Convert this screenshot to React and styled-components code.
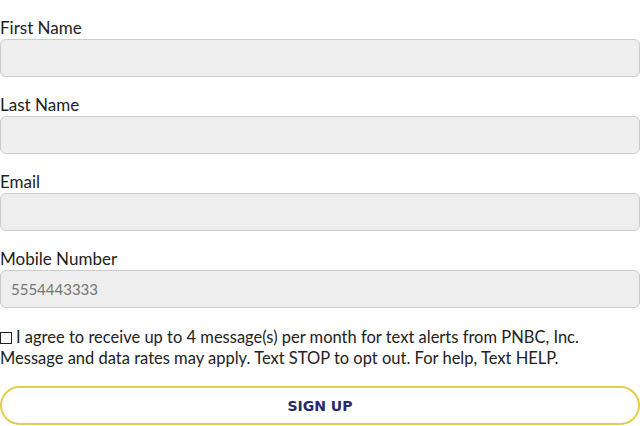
import { createGlobalStyle } from "styled-components";
import styled from "styled-components";

const GlobalStyle = createGlobalStyle`
  html, body {
    margin: 0;
    padding: 0;
    background: #fff;
  }
  body {
    font-family: Lato, "Noto Sans", sans-serif;
    color: #222;
  }
`;

const Form = styled.form`
  display: flex;
  flex-direction: column;
  gap: 17px;
  padding-top: 17px;
  width: 640px;
`;

const Field = styled.div`
  display: flex;
  flex-direction: column;
`;

const Label = styled.label`
  font-size: 17px;
  line-height: 22px;
`;

const Input = styled.input`
  box-sizing: border-box;
  width: 100%;
  height: 38px;
  margin: 0;
  padding: 0 10px;
  background: #eeeeee;
  border: 1px solid #cccccc;
  border-radius: 6px;
  font-family: Lato, "Noto Sans", sans-serif;
  font-size: 15px;
  color: #222;
  outline: none;

  &::placeholder {
    color: #757575;
  }
`;

const Consent = styled.label`
  font-size: 16.5px;
  line-height: 21px;
  padding-top: 2px;
`;

const Check = styled.input`
  appearance: none;
  box-sizing: border-box;
  width: 12px;
  height: 12px;
  margin: 0 4px 0 0;
  border: 1px solid #222;
  border-radius: 0;
  vertical-align: -1px;
  background: #fff;
`;

const SignUp = styled.button`
  box-sizing: border-box;
  width: 100%;
  height: 39px;
  background: #fff;
  border: 2px solid #e3cd4f;
  border-radius: 20px;
  font-family: "DejaVu Sans", Verdana, sans-serif;
  font-weight: bold;
  font-size: 14px;
  color: #272a68;
  cursor: pointer;
`;

const fields = [
  { id: "first", label: "First Name" },
  { id: "last", label: "Last Name" },
  { id: "email", label: "Email" },
  { id: "mobile", label: "Mobile Number", placeholder: "5554443333" },
];

export default function App() {
  return (
    <>
      <GlobalStyle />
      <Form onSubmit={(e) => e.preventDefault()}>
        {fields.map((f) => (
          <Field key={f.id}>
            <Label htmlFor={f.id}>{f.label}</Label>
            <Input id={f.id} placeholder={f.placeholder} />
          </Field>
        ))}
        <Consent>
          <Check type="checkbox" />I agree to receive up to 4 message(s) per
          month for text alerts from PNBC, Inc.
          <br />
          Message and data rates may apply. Text STOP to opt out. For help,
          Text HELP.
        </Consent>
        <SignUp type="submit">SIGN UP</SignUp>
      </Form>
    </>
  );
}
